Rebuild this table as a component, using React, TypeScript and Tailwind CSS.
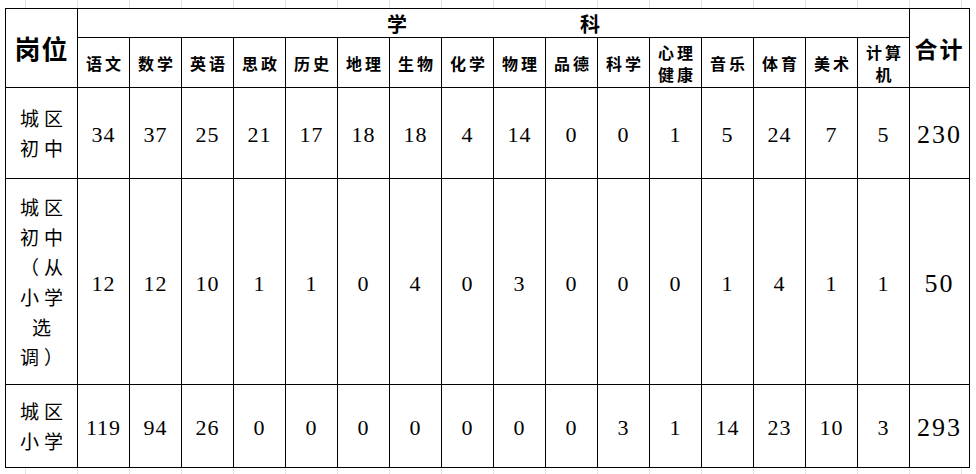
const subjects = [
  ["语文"],
  ["数学"],
  ["英语"],
  ["思政"],
  ["历史"],
  ["地理"],
  ["生物"],
  ["化学"],
  ["物理"],
  ["品德"],
  ["科学"],
  ["心理", "健康"],
  ["音乐"],
  ["体育"],
  ["美术"],
  ["计算", "机"],
];

const rows = [
  {
    label: ["城区", "初中"],
    h: "h-[91px]",
    nums: [34, 37, 25, 21, 17, 18, 18, 4, 14, 0, 0, 1, 5, 24, 7, 5],
    total: 230,
  },
  {
    label: ["城区", "初中", "（从", "小学", "选", "调）"],
    h: "h-[206px]",
    nums: [12, 12, 10, 1, 1, 0, 4, 0, 3, 0, 0, 0, 1, 4, 1, 1],
    total: 50,
  },
  {
    label: ["城区", "小学"],
    h: "h-[83px]",
    nums: [119, 94, 26, 0, 0, 0, 0, 0, 0, 0, 3, 1, 14, 23, 10, 3],
    total: 293,
  },
];

const cjk = "font-['Noto_Sans_CJK_SC',sans-serif]";
const serif = "font-['Liberation_Serif',serif]";

export default function App() {
  return (
    <div className="w-[976px] h-[474px] bg-white bg-[repeating-linear-gradient(90deg,transparent_0_25px,#e4e4e4_25px_26px,transparent_26px_52px)] pt-[8px] pl-[5px] text-black">
      <table className="table-fixed border-collapse bg-white w-[965px]">
        <colgroup>
          <col className="w-[72px]" />
          {subjects.map((_, i) => (
            <col key={i} className="w-[52px]" />
          ))}
          <col className="w-[60px]" />
        </colgroup>
        <thead>
          <tr className="h-[29px]">
            <th
              rowSpan={2}
              className={`border border-black text-[26px] font-bold leading-none tracking-[1px] ${cjk}`}
            >
              岗位
            </th>
            <th colSpan={16} className={`border border-black p-0 ${cjk}`}>
              <div className="flex justify-center gap-[173px] text-[20px] font-bold leading-none pt-[2px]">
                <span>学</span>
                <span>科</span>
              </div>
            </th>
            <th
              rowSpan={2}
              className={`border border-black text-[23px] font-bold leading-none tracking-[2px] ${cjk}`}
            >
              合计
            </th>
          </tr>
          <tr className="h-[50px]">
            {subjects.map((s, i) => (
              <th
                key={i}
                className={`border border-black p-0 text-[16px] font-bold tracking-[3px] leading-[22px] ${cjk}`}
              >
                {s.map((line, j) => (
                  <div key={j} className="pl-[3px]">
                    {line}
                  </div>
                ))}
              </th>
            ))}
          </tr>
        </thead>
        <tbody>
          {rows.map((r, i) => (
            <tr key={i} className={r.h}>
              <td className={`border border-black p-0 text-center text-[19px] tracking-[5px] leading-[30px] ${cjk}`}>
                {r.label.map((line, j) => (
                  <div key={j} className="pl-[5px]">
                    {line}
                  </div>
                ))}
              </td>
              {r.nums.map((n, j) => (
                <td
                  key={j}
                  className={`border border-black p-0 pt-[3px] text-center text-[22px] tracking-[1px] ${serif}`}
                >
                  {n}
                </td>
              ))}
              <td className={`border border-black p-0 pt-[3px] text-center text-[26px] tracking-[2px] ${serif}`}>
                {r.total}
              </td>
            </tr>
          ))}
        </tbody>
      </table>
    </div>
  );
}
